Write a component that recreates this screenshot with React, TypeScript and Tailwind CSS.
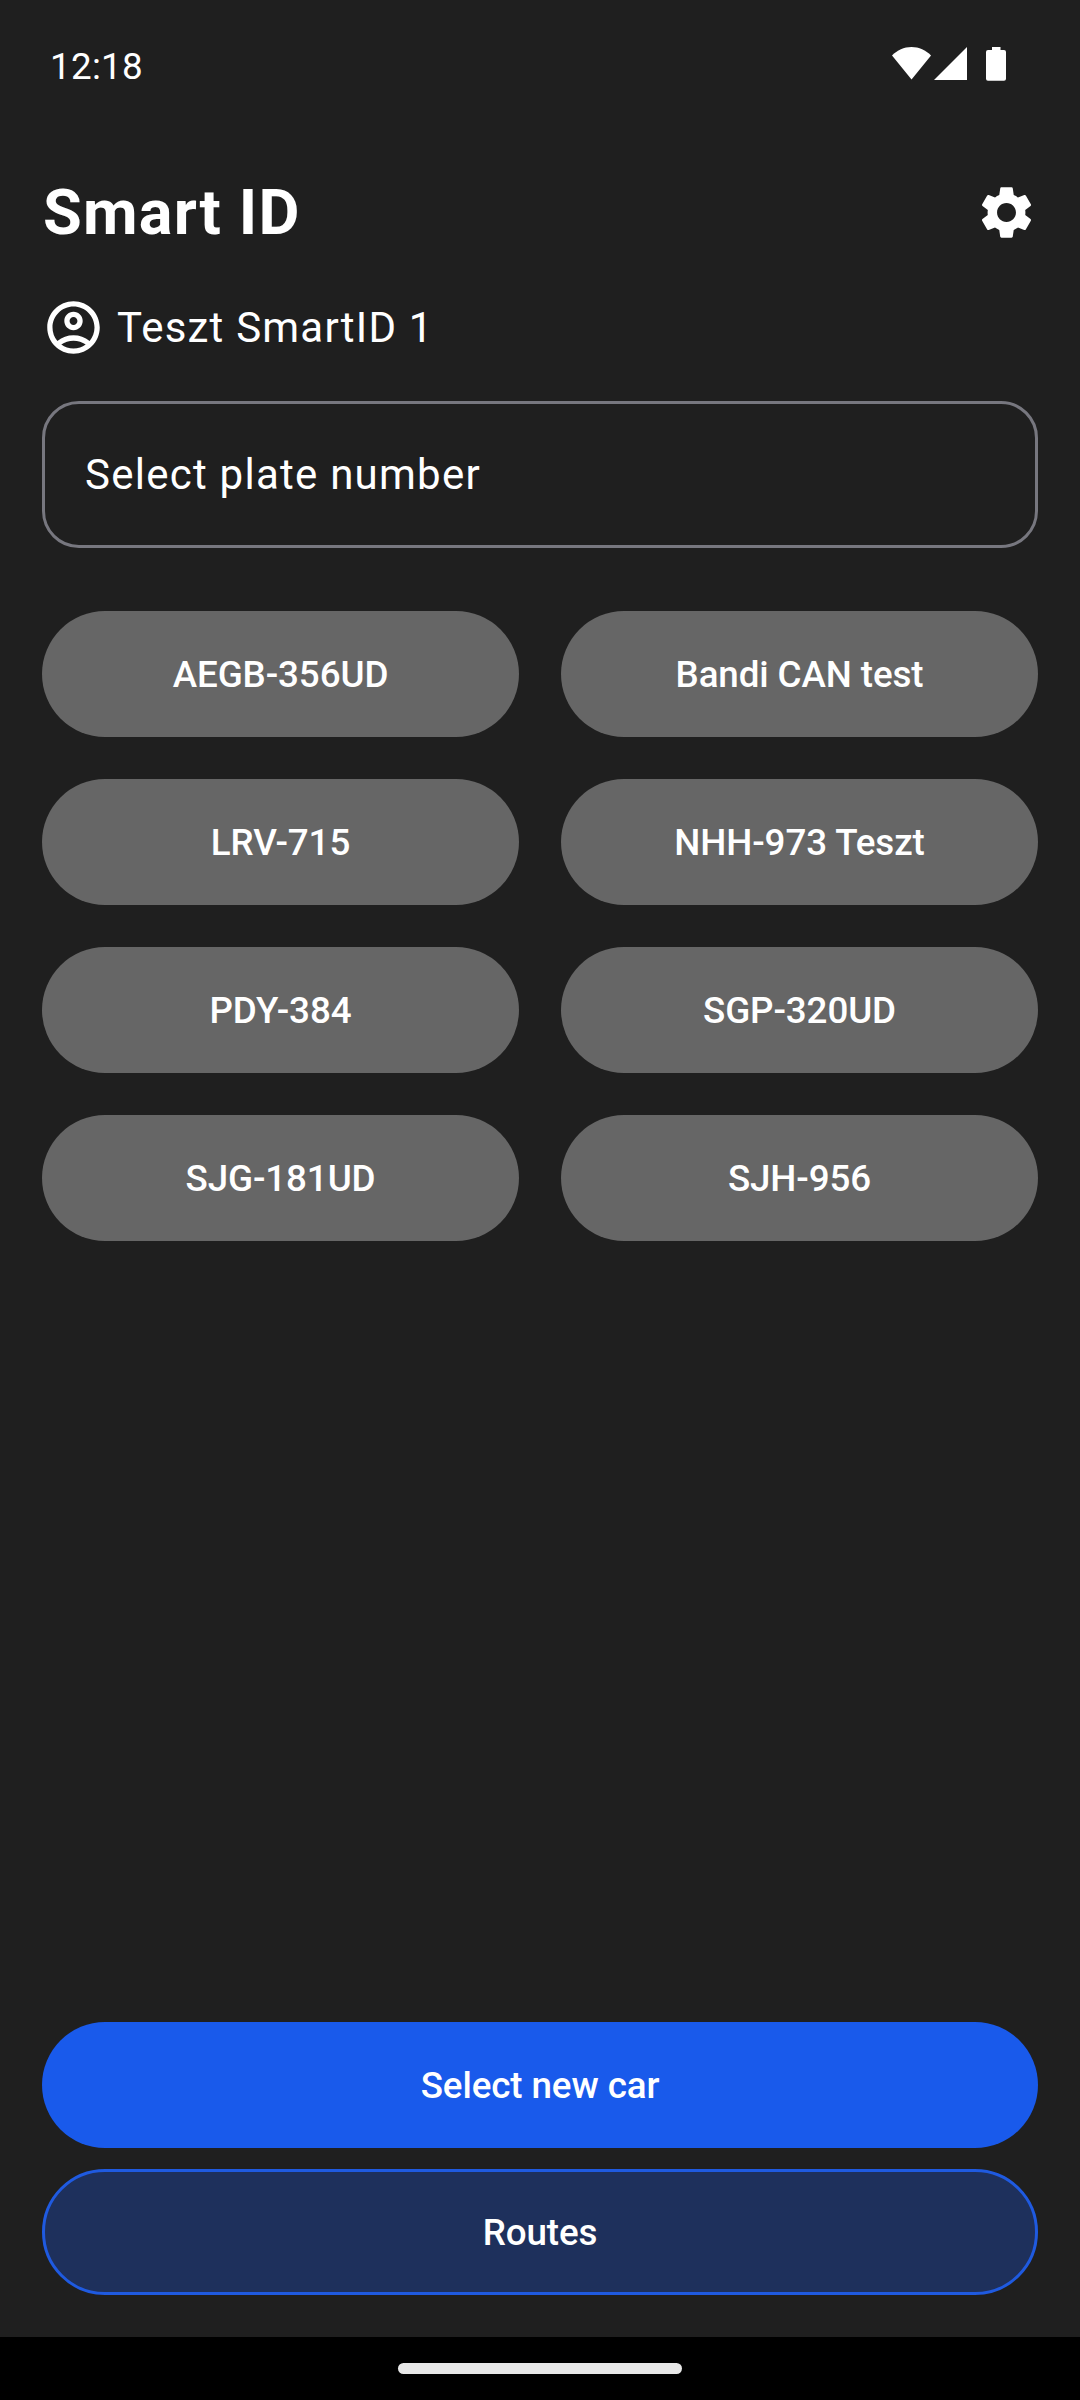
import React, { useState } from "react";
import { MdOutlineAccountCircle, MdSettings } from "react-icons/md";

const PLATES = [
  "AEGB-356UD",
  "Bandi CAN test",
  "LRV-715",
  "NHH-973 Teszt",
  "PDY-384",
  "SGP-320UD",
  "SJG-181UD",
  "SJH-956",
];

function StatusBar() {
  return (
    <div className="h-[132px] shrink-0 flex items-center pl-[50px] pr-[74px]">
      <span className="text-[36.75px] leading-none tracking-[0.3px] pt-[2px]">12:18</span>
      <svg className="ml-auto w-[114px] h-[34px] -mt-[4px]" viewBox="0 0 114 34" fill="#fff">
        {/* wifi */}
        <path d="M0 8.6C5.2 3.2 12 .1 19.5 .1S33.800 3.200 39 8.600L19.500 32.600Z" />
        {/* signal */}
        <path d="M75 0V33H42Z" />
        {/* battery */}
        <path d="M100 0h8.500v3h3.500a2 2 0 0 1 2 2v26.800a2 2 0 0 1-2 2h-16a2 2 0 0 1-2-2V5a2 2 0 0 1 2-2h4Z" />
      </svg>
    </div>
  );
}

export default function App() {
  const [selected, setSelected] = useState("");

  return (
    <div
      className="w-[1080px] h-[2400px] bg-[#1f1f1f] text-white flex flex-col select-none"
      style={{ fontFamily: "Roboto, sans-serif" }}
    >
      <StatusBar />

      <main className="flex-1 flex flex-col px-[42px]">
        {/* Title */}
        <header className="h-[160px] flex items-center justify-between">
          <h1 className="pl-px text-[63px] leading-none font-bold tracking-[1.2px]">Smart ID</h1>
          <button aria-label="Settings">
            <MdSettings className="size-[63px]" />
          </button>
        </header>

        {/* Signed-in user */}
        <div className="h-[71px] flex items-center gap-[12px]">
          <MdOutlineAccountCircle className="size-[63px]" />
          <span className="text-[42px] leading-none tracking-[1.2px]">Teszt SmartID 1</span>
        </div>

        <div className="mt-[38px] h-[147px] shrink-0 rounded-[37px] border-[3px] border-[#77777f] flex items-center px-[40px]">
          <span className="text-[42px] leading-none tracking-[1.25px]">Select plate number</span>
        </div>

        {/* Plates */}
        <div className="mt-[63px] grid grid-cols-2 gap-[42px]">
          {PLATES.map(plate => (
            <button
              key={plate}
              aria-pressed={selected === plate}
              onClick={() => setSelected(plate)}
              className="h-[126px] pt-[2px] rounded-full bg-[#666666] text-[36.75px] leading-none font-medium tracking-[-0.1px]"
            >
              {plate}
            </button>
          ))}
        </div>

        {/* Actions */}
        <div className="mt-auto mb-[42px] flex flex-col gap-[21px]">
          <button className="h-[126px] pt-[2px] rounded-full bg-[#195aeb] text-[36.75px] leading-none font-medium tracking-[-0.1px]">
            Select new car
          </button>
          <button className="h-[126px] pt-[2px] rounded-full border-[3px] border-[#1f5ae0] bg-[#1e305c] text-[36.75px] leading-none font-medium tracking-[-0.1px]">
            Routes
          </button>
        </div>
      </main>

      {/* Gesture bar */}
      <footer className="h-[63px] shrink-0 bg-black flex items-center justify-center">
        <div className="w-[284px] h-[11px] rounded-full bg-[#e8e8e8]" />
      </footer>
    </div>
  );
}
